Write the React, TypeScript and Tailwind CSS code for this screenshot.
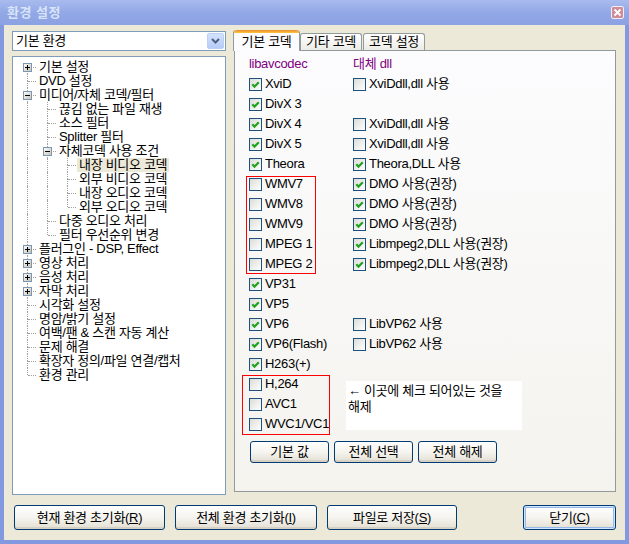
import * as React from "react";

/** XP-style "환경 설정" dialog: settings tree on the left, codec tab on the right. */

type Node = { label: string; level: number; exp?: "+" | "-"; sel?: boolean };

const tree: Node[] = [
  { label: "기본 설정", level: 0, exp: "+" },
  { label: "DVD 설정", level: 0 },
  { label: "미디어/자체 코덱/필터", level: 0, exp: "-" },
  { label: "끊김 없는 파일 재생", level: 1 },
  { label: "소스 필터", level: 1 },
  { label: "Splitter 필터", level: 1 },
  { label: "자체코덱 사용 조건", level: 1, exp: "-" },
  { label: "내장 비디오 코덱", level: 2, sel: true },
  { label: "외부 비디오 코덱", level: 2 },
  { label: "내장 오디오 코덱", level: 2 },
  { label: "외부 오디오 코덱", level: 2 },
  { label: "다중 오디오 처리", level: 1 },
  { label: "필터 우선순위 변경", level: 1 },
  { label: "플러그인 - DSP, Effect", level: 0, exp: "+" },
  { label: "영상 처리", level: 0, exp: "+" },
  { label: "음성 처리", level: 0, exp: "+" },
  { label: "자막 처리", level: 0, exp: "+" },
  { label: "시각화 설정", level: 0 },
  { label: "명암/밝기 설정", level: 0 },
  { label: "여백/팬 & 스캔 자동 계산", level: 0 },
  { label: "문제 해결", level: 0 },
  { label: "확장자 정의/파일 연결/캡처", level: 0 },
  { label: "환경 관리", level: 0 },
];

// does a sibling at `lvl` follow row idx before the branch closes?
function siblingAfter(idx: number, lvl: number): boolean {
  for (let j = idx + 1; j < tree.length; j++) {
    if (tree[j].level < lvl) return false;
    if (tree[j].level === lvl) return true;
  }
  return false;
}

type Pair = { a: string; ac: boolean; b?: string; bc?: boolean };

const top: Pair[] = [
  { a: "XviD", ac: true, b: "XviDdll,dll 사용", bc: false },
  { a: "DivX 3", ac: true },
  { a: "DivX 4", ac: true, b: "XviDdll,dll 사용", bc: false },
  { a: "DivX 5", ac: true, b: "XviDdll,dll 사용", bc: false },
  { a: "Theora", ac: true, b: "Theora,DLL 사용", bc: true },
];
const boxed: Pair[] = [
  { a: "WMV7", ac: false, b: "DMO 사용(권장)", bc: true },
  { a: "WMV8", ac: false, b: "DMO 사용(권장)", bc: true },
  { a: "WMV9", ac: false, b: "DMO 사용(권장)", bc: true },
  { a: "MPEG 1", ac: false, b: "Libmpeg2,DLL 사용(권장)", bc: true },
  { a: "MPEG 2", ac: false, b: "Libmpeg2,DLL 사용(권장)", bc: true },
];
const middle: Pair[] = [
  { a: "VP31", ac: true },
  { a: "VP5", ac: true },
  { a: "VP6", ac: true, b: "LibVP62 사용", bc: false },
  { a: "VP6(Flash)", ac: true, b: "LibVP62 사용", bc: false },
  { a: "H263(+)", ac: true },
];
const last = ["H,264", "AVC1", "WVC1/VC1"];

function Check({ checked }: { checked: boolean }) {
  return (
    <span className="w-[13px] h-[13px] shrink-0 border border-[#1c5180] bg-linear-to-br from-[#dcdcd7] to-white flex items-center justify-center">
      {checked ? (
        <svg width="11" height="11" viewBox="0 0 11 11">
          <path d="M2.3 5.2 L4.5 7.6 L8.8 3.2" stroke="#21a121" strokeWidth="2.1" fill="none" />
        </svg>
      ) : null}
    </span>
  );
}

function Item({ label, checked }: { label: string; checked: boolean }) {
  return (
    <div className="flex items-center gap-[3px] whitespace-nowrap">
      <Check checked={checked} />
      <span className="leading-[16px]">{label}</span>
    </div>
  );
}

function Row({ p }: { p: Pair }) {
  return (
    <div className="h-[20px] flex items-center">
      <div className="w-[104px]">
        <Item label={p.a} checked={p.ac} />
      </div>
      {p.b ? <Item label={p.b} checked={!!p.bc} /> : null}
    </div>
  );
}

function XpButton({
  children,
  className = "",
  isDefault = false,
}: {
  children: React.ReactNode;
  className?: string;
  isDefault?: boolean;
}) {
  return (
    <button
      type="button"
      className={`border border-[#003c74] rounded-[3px] bg-linear-to-b from-white via-[#f5f4ef] to-[#e2dfd3] flex items-center justify-center text-[13px] leading-[16px] text-black whitespace-nowrap ${
        isDefault ? "shadow-[inset_0_0_0_1px_#cee7ff,inset_0_0_0_2px_#98b8ea]" : "shadow-[inset_0_-2px_0_#d6d0c5]"
      } ${className}`}
    >
      {children}
    </button>
  );
}

function Expander({ kind }: { kind: "+" | "-" }) {
  return (
    <svg className="absolute left-[6px] top-[3px]" width="9" height="9" viewBox="0 0 9 9">
      <defs>
        <linearGradient id="exg" x1="0" y1="0" x2="1" y2="1">
          <stop offset="0" stopColor="#ffffff" />
          <stop offset="1" stopColor="#c6beaf" />
        </linearGradient>
      </defs>
      <rect x="0.5" y="0.5" width="8" height="8" fill="url(#exg)" stroke="#7898b5" />
      <rect x="2" y="4" width="5" height="1" fill="#000" />
      {kind === "+" ? <rect x="4" y="2" width="1" height="5" fill="#000" /> : null}
    </svg>
  );
}

function TreeRow({ node, idx }: { node: Node; idx: number }) {
  const guides = Array.from({ length: node.level }, (_, i) => siblingAfter(idx, i));
  const next = siblingAfter(idx, node.level);
  return (
    <div className="h-[14px] flex items-center whitespace-nowrap">
      {guides.map((g, i) => (
        <div key={i} className="w-[20px] h-[14px] relative shrink-0">
          {g ? (
            <div className="absolute left-[10px] top-0 bottom-0 border-l border-dotted border-[#a0a0a0]" />
          ) : null}
        </div>
      ))}
      <div className="w-[20px] h-[14px] relative shrink-0">
        {idx > 0 ? (
          <div className="absolute left-[10px] top-0 h-[7px] border-l border-dotted border-[#a0a0a0]" />
        ) : null}
        {next ? (
          <div className="absolute left-[10px] top-[7px] bottom-0 border-l border-dotted border-[#a0a0a0]" />
        ) : null}
        <div className="absolute left-[11px] top-[7px] w-[8px] border-t border-dotted border-[#a0a0a0]" />
        {node.exp ? <Expander kind={node.exp} /> : null}
      </div>
      <span className={`px-[2px] h-[14px] leading-[14px] ${node.sel ? "bg-[#ece9d8]" : ""}`}>{node.label}</span>
    </div>
  );
}

export default function App() {
  return (
    <div className="w-[629px] h-[544px] flex flex-col bg-[#ece9d8] overflow-hidden text-[13px] tracking-[-0.3px] text-black font-['Liberation_Sans','Noto_Sans_CJK_KR',sans-serif]">
      {/* title bar (inactive) */}
      <div className="h-[25px] shrink-0 flex items-center justify-between pl-[7px] pr-[5px] bg-linear-to-b from-[#a9bbee] via-[#93a8e6] to-[#8ba1e2]">
        <span className="text-[13px] font-bold text-[#d8e4f8] tracking-[0.5px]">환경 설정</span>
        <span className="w-[13px] h-[13px] rounded-[2px] border border-[#eef0fa] bg-[#cf8d98] flex items-center justify-center">
          <svg width="9" height="9" viewBox="0 0 9 9">
            <path d="M1.5 1.5 L7.5 7.5 M7.5 1.5 L1.5 7.5" stroke="#fff" strokeWidth="1.8" />
          </svg>
        </span>
      </div>

      <div className="flex-1 flex flex-col border-x-[4px] border-b-[4px] border-[#8399df] pl-[8px] pr-[9px] pt-[5px]">
        <div className="flex items-start">
          {/* left column */}
          <div className="w-[214px] mt-[1px] flex flex-col gap-[5px]">
            <div className="h-[20px] border border-[#7f9db9] bg-white flex items-center">
              <span className="flex-1 pl-[3px] leading-[16px]">기본 환경</span>
              <span className="w-[17px] h-[16px] mr-[1px] rounded-[2px] border border-[#b9cff5] bg-linear-to-b from-[#d4e2fd] to-[#b6cbf6] flex items-center justify-center">
                <svg width="11" height="8" viewBox="0 0 11 8">
                  <path d="M2 2 L5.5 5.5 L9 2" stroke="#4d6185" strokeWidth="2" fill="none" />
                </svg>
              </span>
            </div>
            <div className="h-[439px] border border-[#7f9db9] bg-white pt-[3px] pl-[4px]">
              {tree.map((n, i) => (
                <TreeRow key={i} node={n} idx={i} />
              ))}
            </div>
          </div>

          {/* right column: tabs */}
          <div className="ml-[8px] w-[382px] flex flex-col">
            <div className="h-[21px] -mb-[1px] ml-[-1px] flex items-end relative z-10">
              <div className="h-[21px] w-[67px] rounded-t-[3px] border-x border-[#919b9c] bg-[#fcfcfe] flex flex-col">
                <div className="h-[3px] rounded-t-[3px] bg-linear-to-b from-[#e68b2c] to-[#ffc73c]" />
                <div className="flex-1 flex items-center justify-center leading-[16px]">기본 코덱</div>
              </div>
              <div className="h-[17px] w-[62px] mb-[1px] rounded-t-[3px] border border-b-0 border-[#919b9c] bg-linear-to-b from-white to-[#ecebe6] flex items-center justify-center leading-[16px]">
                기타 코덱
              </div>
              <div className="h-[17px] w-[62px] mb-[1px] ml-[1px] rounded-t-[3px] border border-b-0 border-[#919b9c] bg-linear-to-b from-white to-[#ecebe6] flex items-center justify-center leading-[16px]">
                코덱 설정
              </div>
            </div>
            <div className="h-[442px] border border-[#919b9c] bg-linear-to-b from-[#fcfcfe] to-[#f4f3ee] pt-[3px] pl-[14px]">
              <div className="h-[20px] flex items-center text-[#800080] leading-[16px]">
                <span className="w-[104px]">libavcodec</span>
                <span>대체 dll</span>
              </div>
              {top.map((p, i) => (
                <Row key={i} p={p} />
              ))}
              <div className="relative">
                {boxed.map((p, i) => (
                  <Row key={i} p={p} />
                ))}
                <div className="absolute left-[-3px] top-[2px] bottom-0 w-[70px] border border-[#ff0000]" />
              </div>
              {middle.map((p, i) => (
                <Row key={i} p={p} />
              ))}
              <div className="flex items-start">
                <div className="w-[104px] relative">
                  {last.map((l) => (
                    <div key={l} className="h-[20px] flex items-center">
                      <Item label={l} checked={false} />
                    </div>
                  ))}
                  <div className="absolute left-[-7px] top-[1px] bottom-[-1px] w-[88px] border border-[#ff0000]" />
                </div>
                <div className="ml-[-7px] mt-[7px] w-[176px] h-[49px] bg-white px-[2px] pt-[2px] leading-[16px]">
                  ← 이곳에 체크 되어있는 것을
                  <br />
                  해제
                </div>
              </div>
              <div className="mt-[7px] ml-[1px] flex gap-[5px]">
                <XpButton className="w-[79px] h-[22px]">기본 값</XpButton>
                <XpButton className="w-[79px] h-[22px]">전체 선택</XpButton>
                <XpButton className="w-[79px] h-[22px]">전체 해제</XpButton>
              </div>
            </div>
          </div>
        </div>

        {/* bottom buttons */}
        <div className="mt-[10px] ml-[2px] flex">
          <XpButton className="w-[151px] h-[25px]">
            현재 환경 초기화(<u>R</u>)
          </XpButton>
          <XpButton className="w-[142px] h-[25px] ml-[10px]">
            전체 환경 초기화(<u>I</u>)
          </XpButton>
          <XpButton className="w-[130px] h-[25px] ml-[10px]">
            파일로 저장(<u>S</u>)
          </XpButton>
          <XpButton className="w-[93px] h-[25px] ml-auto" isDefault>
            닫기(<u>C</u>)
          </XpButton>
        </div>
      </div>
    </div>
  );
}
